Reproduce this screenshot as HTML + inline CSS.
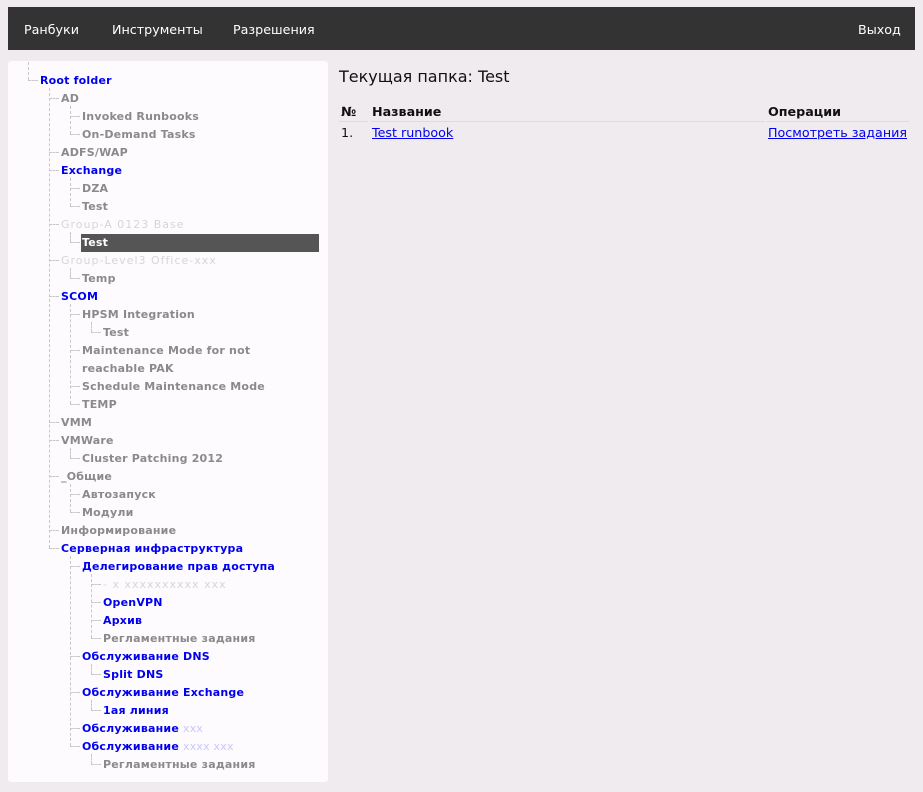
<!DOCTYPE html>
<html><head><meta charset="utf-8"><style>
body{margin:0;background:#efebee;font-family:"DejaVu Sans","Liberation Sans",sans-serif;width:923px;height:792px;overflow:hidden;position:relative}
.nav{position:absolute;left:8px;top:7px;width:907px;height:43px;background:#333;color:#fff;font-size:12.7px}
.nav span{position:absolute;top:15px}
.panel{position:absolute;left:8px;top:61px;width:320px;height:721px;background:#fdfbfd;border-radius:3px}
.r{position:absolute;font-size:11px;font-weight:bold;line-height:18px;height:18px;white-space:nowrap;letter-spacing:0.2px}
.g{color:#8a8a8a}.b{color:#0000ee}.l{color:#d8d4d8;font-weight:normal;letter-spacing:1px}
.sel{background:#555;color:#fff;width:237px}
.v{position:absolute;border-left:1px dashed #c8c8c8;width:0}
.h{position:absolute;border-top:1px dashed #c8c8c8;height:0}
.title{position:absolute;left:339px;top:67px;font-size:16px;color:#111}
.th{position:absolute;top:104px;font-size:12.7px;font-weight:bold;color:#111}
.td{position:absolute;top:125px;font-size:12.7px;color:#111}
a{color:#0000ee;text-decoration:underline}
.line{position:absolute;top:121px;height:1px;background:#dcdcdc}
</style></head><body>
<div class="nav"><span style="left:16px">Ранбуки</span><span style="left:104px">Инструменты</span><span style="left:225px">Разрешения</span><span style="left:850px">Выход</span></div>
<div class="panel"></div>
<div id="tree"></div>
<div class="title">Текущая папка: Test</div>
<div class="th" style="left:341px">№</div>
<div class="th" style="left:372px">Название</div>
<div class="th" style="left:768px">Операции</div>
<div class="line" style="left:339px;width:29px"></div>
<div class="line" style="left:371px;width:394px"></div>
<div class="line" style="left:767px;width:142px"></div>
<div class="td" style="left:341px">1.</div>
<div class="td" style="left:372px"><a>Test runbook</a></div>
<div class="td" style="left:768px"><a>Посмотреть задания</a></div>
<script>
var rows=[[0,"Root folder","b"],[1,"AD","g"],[2,"Invoked Runbooks","g"],[2,"On-Demand Tasks","g"],[1,"ADFS/WAP","g"],[1,"Exchange","b"],[2,"DZA","g"],[2,"Test","g"],[1,"Group-A 0123 Base","l"],[2,"Test","sel"],[1,"Group-Level3 Office-xxx","l"],[2,"Temp","g"],[1,"SCOM","b"],[2,"HPSM Integration","g"],[3,"Test","g"],[2,"Maintenance Mode for not","g"],[-2,"reachable PAK","g"],[2,"Schedule Maintenance Mode","g"],[2,"TEMP","g"],[1,"VMM","g"],[1,"VMWare","g"],[2,"Cluster Patching 2012","g"],[1,"_Общие","g"],[2,"Автозапуск","g"],[2,"Модули","g"],[1,"Информирование","g"],[1,"Серверная инфраструктура","b"],[2,"Делегирование прав доступа","b"],[3,"- x xxxxxxxxxx xxx","l"],[3,"OpenVPN","b"],[3,"Архив","b"],[3,"Регламентные задания","g"],[2,"Обслуживание DNS","b"],[3,"Split DNS","b"],[2,"Обслуживание Exchange","b"],[3,"1ая линия","b"],[2,"Обслуживание <span style='color:#c8c8ff;font-weight:normal'>xxx</span>","b"],[2,"Обслуживание <span style='color:#c8c8ff;font-weight:normal'>xxxx xxx</span>","b"],[3,"Регламентные задания","g"]];
var tx=[40,61,82,103],vx=[28,49,70,91],h="";
for(var i=0;i<rows.length;i++){var L=rows[i][0],c=81+18*i,t=rows[i][2];
 var LL=Math.abs(L);
 h+='<div class="r '+(t=="sel"?"sel":t)+'" style="left:'+(tx[LL]-(t=="sel"?1:0))+'px;top:'+(c-9)+'px;'+(t=="sel"?'padding-left:1px':'')+'">'+rows[i][1]+'</div>';
 if(L>=0){h+='<div class="h" style="left:'+vx[L]+'px;top:'+(c-1)+'px;width:'+(tx[L]-vx[L]-2)+'px"></div>';}
}
var vs=[[28,62,80],[49,88,548],[70,106,134],[70,178,206],[70,268,278],[70,304,404],[91,322,332],[70,448,458],[70,484,512],[70,556,746],[91,574,638],[91,664,674],[91,700,710],[91,754,764]];
vs.forEach(function(v){if(v[2]>v[1])h+='<div class="v" style="left:'+v[0]+'px;top:'+v[1]+'px;height:'+(v[2]-v[1])+'px"></div>';});
h+='<div class="v" style="left:70px;top:232px;height:10px"></div>';
document.getElementById("tree").innerHTML=h;
</script>
</body></html>
